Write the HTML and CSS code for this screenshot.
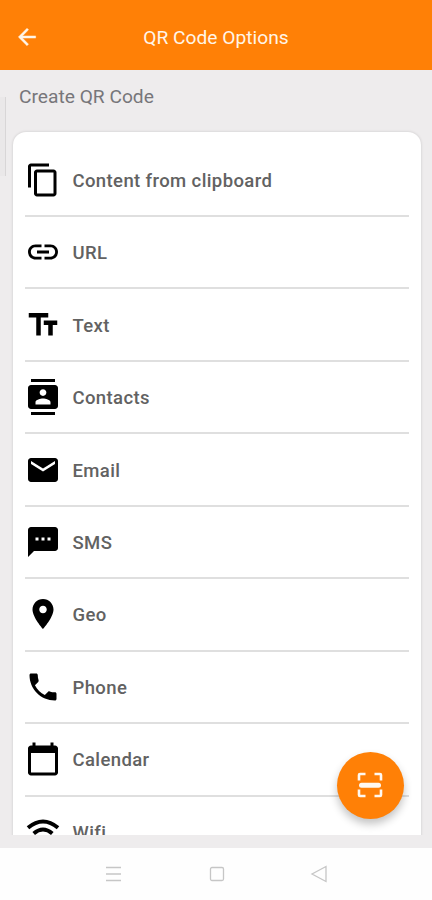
FILE: index.html
```html
<!DOCTYPE html>
<html lang="en">
<head>
    <meta charset="UTF-8">
    <meta name="viewport" content="width=device-width, initial-scale=1.0">
    <title>QR Code Options</title>
    <link rel="stylesheet" href="styles.css">
</head>
<body>
    <header class="top_bar">
        <svg class="back" viewBox="0 0 24 24"><path d="M20 11H7.83l5.59-5.59L12 4l-8 8 8 8 1.41-1.41L7.83 13H20v-2z"/></svg>
        <h1>QR Code Options</h1>
    </header>
    <main>
        <h2>Create QR Code</h2>
        <div class="scroll_mark"></div>
        <div class="list_area">
            <ul class="card">
                <li>
                    <svg viewBox="0 0 24 24"><path d="M16 1H4c-1.1 0-2 .9-2 2v14h2V3h12V1zm3 4H8c-1.1 0-2 .9-2 2v14c0 1.1.9 2 2 2h11c1.1 0 2-.9 2-2V7c0-1.1-.9-2-2-2zm0 16H8V7h11v14z"/></svg>
                    <span>Content from clipboard</span>
                </li>
                <li>
                    <svg viewBox="0 0 24 24"><path d="M3.9 12c0-1.71 1.39-3.1 3.1-3.1h4V7H7c-2.76 0-5 2.24-5 5s2.24 5 5 5h4v-1.9H7c-1.71 0-3.1-1.39-3.1-3.1zM8 13h8v-2H8v2zm9-6h-4v1.9h4c1.71 0 3.1 1.39 3.1 3.1s-1.39 3.1-3.1 3.1h-4V17h4c2.76 0 5-2.24 5-5s-2.24-5-5-5z"/></svg>
                    <span>URL</span>
                </li>
                <li>
                    <svg viewBox="0 0 24 24"><path d="M2.5 4v3h5v12h3V7h5V4h-13zm19 5h-9v3h3v7h3v-7h3V9z"/></svg>
                    <span>Text</span>
                </li>
                <li>
                    <svg viewBox="0 0 24 24"><path d="M20 0H4v2h16V0zM4 24h16v-2H4v2zM20 4H4c-1.1 0-2 .9-2 2v12c0 1.1.9 2 2 2h16c1.1 0 2-.9 2-2V6c0-1.1-.9-2-2-2zm-8 2.75c1.24 0 2.25 1.01 2.25 2.25s-1.01 2.25-2.25 2.25S9.75 10.24 9.75 9 10.76 6.75 12 6.75zM17 17H7v-1.5c0-1.67 3.33-2.5 5-2.5s5 .83 5 2.5V17z"/></svg>
                    <span>Contacts</span>
                </li>
                <li>
                    <svg viewBox="0 0 24 24"><path d="M20 4H4c-1.1 0-2 .9-2 2v12c0 1.1.9 2 2 2h16c1.1 0 2-.9 2-2V6c0-1.1-.9-2-2-2zm0 4l-8 5-8-5V6l8 5 8-5v2z"/></svg>
                    <span>Email</span>
                </li>
                <li>
                    <svg viewBox="0 0 24 24"><path d="M20 2H4c-1.1 0-2 .9-2 2v18l4-4h14c1.1 0 2-.9 2-2V4c0-1.1-.9-2-2-2zM9 11H7V9h2v2zm4 0h-2V9h2v2zm4 0h-2V9h2v2z"/></svg>
                    <span>SMS</span>
                </li>
                <li>
                    <svg viewBox="0 0 24 24"><path d="M12 2C8.13 2 5 5.13 5 9c0 5.25 7 13 7 13s7-7.75 7-13c0-3.87-3.13-7-7-7zm0 9.5c-1.38 0-2.5-1.12-2.5-2.5s1.12-2.5 2.5-2.5 2.5 1.12 2.5 2.5-1.12 2.5-2.5 2.5z"/></svg>
                    <span>Geo</span>
                </li>
                <li>
                    <svg viewBox="0 0 24 24"><path d="M6.62 10.79c1.44 2.83 3.76 5.14 6.59 6.59l2.2-2.2c.27-.27.67-.36 1.02-.24 1.12.37 2.33.57 3.57.57.55 0 1 .45 1 1V20c0 .55-.45 1-1 1-9.39 0-17-7.61-17-17 0-.55.45-1 1-1h3.5c.55 0 1 .45 1 1 0 1.25.2 2.45.57 3.57.11.35.03.74-.25 1.02l-2.2 2.2z"/></svg>
                    <span>Phone</span>
                </li>
                <li>
                    <svg viewBox="0 0 24 24"><path d="M20 3h-1V1h-2v2H7V1H5v2H4c-1.1 0-2 .9-2 2v16c0 1.1.9 2 2 2h16c1.1 0 2-.9 2-2V5c0-1.1-.9-2-2-2zm0 18H4V8h16v13z"/></svg>
                    <span>Calendar</span>
                </li>
                <li>
                    <svg class="wifi" viewBox="0 0 24 24"><path d="M2 9.200Q12 .8 22 9.200M5.800 13Q12 7.600 18.200 13M9.500 16.800Q12 14.800 14.500 16.800"/></svg>
                    <span>Wifi</span>
                </li>
            </ul>
        </div>
        <button class="scan_button" aria-label="Scan">
            <svg viewBox="0 0 26 26"><path d="M2 8.500V3Q2 2 3 2h5.500M17.500 2H23Q24 2 24 3v5.500M24 17.500V23q0 1-1 1h-5.500M8.500 24H3Q2 24 2 23v-5.500"/><path class="beam" d="M4.500 13.200h17"/></svg>
        </button>
    </main>
    <nav class="system_bar">
        <svg viewBox="0 0 18 18"><path d="M1 2.500h15M1 9h15M1 15.500h15"/></svg>
        <svg viewBox="0 0 18 18"><rect x="2.500" y="2.500" width="13" height="13" rx="1.500"/></svg>
        <svg viewBox="0 0 18 18"><path d="M16 1.500v15L2 9z"/></svg>
    </nav>
</body>
</html>
```

FILE: styles.css
```css
* {
    box-sizing: border-box;
}
body {
    margin: 0;
    height: 900px;
    display: flex;
    flex-direction: column;
    overflow: hidden;
    font-family: Roboto, "Liberation Sans", sans-serif;
    background: #eeeced;
}
.top_bar {
    display: grid;
    grid-template-columns: 26px 1fr 26px;
    align-items: center;
    height: 70px;
    padding: 4px 14px 0;
    background: #ff8006;
    color: #fff5e8;
}
.back {
    width: 26px;
    height: 28px;
    fill: #fff5e8;
    stroke: #fff5e8;
    stroke-width: 0.4;
}
h1 {
    margin: 0;
    font-size: 19.2px;
    font-weight: 400;
    text-align: center;
}
main {
    position: relative;
    display: flex;
    flex-direction: column;
    height: 778px;
    padding-bottom: 13px;
}
h2 {
    margin: 0;
    padding: 15px 19px 0;
    height: 54px;
    font-size: 19.2px;
    line-height: 24px;
    font-weight: 400;
    color: #77767a;
}
.scroll_mark {
    position: absolute;
    left: 0;
    top: 27px;
    width: 6px;
    height: 79px;
    background: #eae8e9;
    border-right: 1px solid #d8d6d7;
}
/* the list runs on below the visible area */
.list_area {
    flex: 1;
    min-height: 0;
    padding: 8px 11px 0 13px;
    overflow: hidden;
}
.card {
    margin: 0;
    padding: 12.6px 12.5px 12px 11.5px;
    list-style: none;
    background: #fff;
    border-radius: 13px;
    box-shadow: 0 0 3px rgba(0, 0, 0, 0.16);
}
.card li {
    display: flex;
    align-items: center;
    gap: 12px;
    height: 72.45px;
    border-bottom: 2px solid #dfdfdf;
    font-size: 18.5px;
    font-weight: 500;
    letter-spacing: 0.39px;
    color: #626262;
}
.card svg {
    width: 36px;
    height: 36px;
    fill: #000;
}
.card span {
    padding-top: 2px;
}
.card .wifi {
    fill: none;
    stroke: #000;
    stroke-width: 2.6;
}
.scan_button {
    position: absolute;
    right: 28px;
    bottom: 29px;
    display: flex;
    align-items: center;
    justify-content: center;
    width: 67px;
    height: 67px;
    padding: 0 1px 1px 0;
    border: 0;
    border-radius: 50%;
    background: #ff8006;
    box-shadow: 0 5px 8px rgba(0, 0, 0, 0.24);
}
.scan_button svg {
    width: 26px;
    height: 26px;
    fill: none;
    stroke: #fff8f0;
    stroke-width: 2.6;
}
.scan_button .beam {
    stroke-width: 5;
    stroke-linecap: round;
}
.system_bar {
    display: flex;
    align-items: center;
    justify-content: space-between;
    height: 52px;
    padding: 0 104px 0 105px;
    background: #fefefe;
}
.system_bar svg {
    width: 18px;
    height: 18px;
    fill: none;
    stroke: #c6c6c6;
    stroke-width: 1.3;
}
```
